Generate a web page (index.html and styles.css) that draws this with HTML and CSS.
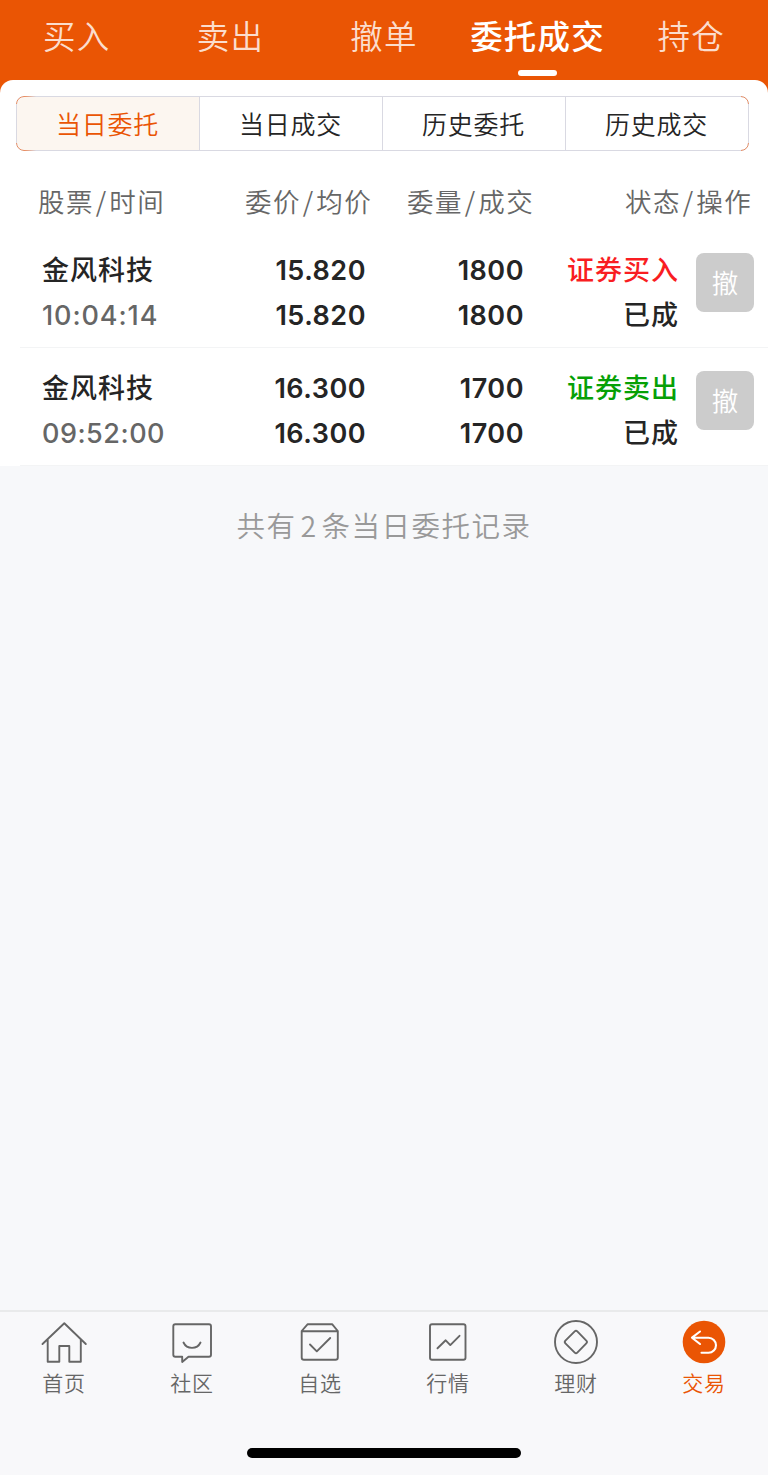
FILE: index.html
```html
<!DOCTYPE html>
<html lang="zh-CN">
<head>
<meta charset="utf-8">
<title>委托成交</title>
<link rel="stylesheet" href="styles.css">
</head>
<body>
<div class="app">
  <header class="top">
    <div class="tab">买入</div>
    <div class="tab">卖出</div>
    <div class="tab">撤单</div>
    <div class="tab active">委托成交</div>
    <div class="tab">持仓</div>
  </header>
  <main class="sheet">
    <div class="segments">
      <div class="segment on">当日委托</div>
      <div class="segment">当日成交</div>
      <div class="segment">历史委托</div>
      <div class="segment">历史成交</div>
    </div>
    <div class="heads">
      <div class="head">股票<i>/</i>时间</div>
      <div class="head">委价<i>/</i>均价</div>
      <div class="head">委量<i>/</i>成交</div>
      <div class="head">状态<i>/</i>操作</div>
    </div>
    <div class="order">
      <div class="cell"><div class="name">金风科技</div><div class="time wide">10:04:14</div></div>
      <div class="cell num"><div>15.820</div><div>15.820</div></div>
      <div class="cell num"><div>1800</div><div>1800</div></div>
      <div class="cell state"><div class="buy">证券买入</div><div>已成</div></div>
      <div class="cancel">撤</div>
    </div>
    <div class="order">
      <div class="cell"><div class="name">金风科技</div><div class="time">09:52:00</div></div>
      <div class="cell num"><div>16.300</div><div>16.300</div></div>
      <div class="cell num"><div>1700</div><div>1700</div></div>
      <div class="cell state"><div class="sell">证券卖出</div><div>已成</div></div>
      <div class="cancel">撤</div>
    </div>
  </main>
  <p class="summary">共有<span class="count">2</span>条当日委托记录</p>
  <nav class="nav">
    <div class="item">
      <svg class="icon" viewBox="0 0 48 48"><path d="M2.500 24 24.300 3.300 45.800 24M7.700 19.500v22.300h11.600V26h10v15.800h11.500V19.500"/></svg>
      <span>首页</span>
    </div>
    <div class="item">
      <svg class="icon" viewBox="0 0 48 48"><path d="M7 4.200h34q2 0 2 2v28.500q0 2-2 2H20.500L14.200 42v-5.300H7.300q-2 0-2-2V6.200q0-2 2-2ZM15.500 22.500a9.400 9.400 0 0 0 17 0"/></svg>
      <span>社区</span>
    </div>
    <div class="item">
      <svg class="icon" viewBox="0 0 48 48"><path d="M11.500 4.300h24.800l5.500 6.700v26.500q0 2.300-2.300 2.300h-31.500q-2.300 0-2.300-2.300V11ZM6 11.200h35.500M14 24.500l6.800 6.800L34.200 18"/></svg>
      <span>自选</span>
    </div>
    <div class="item">
      <svg class="icon" viewBox="0 0 48 48"><rect x="6" y="4.300" width="35.500" height="35.500" rx="2"/><path d="m13.500 28.300 8.200-8 4.600 4.800 9.200-9.300"/></svg>
      <span>行情</span>
    </div>
    <div class="item">
      <svg class="icon" viewBox="0 0 48 48"><circle cx="24" cy="22" r="21"/><path d="m22.700 11.400-9.300 9.300q-1.300 1.300 0 2.600l9.300 9.300q1.300 1.300 2.600 0l9-9.300q1.300-1.300 0-2.600l-9-9.300q-1.300-1.300-2.600 0Z"/></svg>
      <span>理财</span>
    </div>
    <div class="item current">
      <svg class="icon" viewBox="0 0 48 48"><circle class="disc" cx="24" cy="22" r="21.300"/><path d="m20 11.500-8 6.200 8 6.300M12.500 17.700h16a7.500 7.500 0 0 1 0 15H21.500"/></svg>
      <span>交易</span>
    </div>
  </nav>
  <div class="home"><div class="bar"></div></div>
</div>
</body>
</html>
```
FILE: styles.css
```css
* { box-sizing: border-box; }
body {
  margin: 0;
  background: #f7f8fa;
  font-family: "Noto Sans CJK SC", sans-serif;
  color: #252525;
}
.app {
  display: flex;
  flex-direction: column;
  width: 768px;
  height: 1475px;
  background: linear-gradient(#ea5504 0 100px, #f7f8fa 100px);
}
.top { display: flex; height: 80px; }
.tab {
  flex: 1;
  display: flex;
  flex-direction: column;
  align-items: center;
  padding-top: 11px;
  color: #fbddcd;
  font-size: 32.500px;
  line-height: 48px;
  font-weight: 350;
  letter-spacing: 1.200px;
  white-space: nowrap;
}
.tab.active { color: #fff; font-weight: 500; }
.tab.active::after {
  content: "";
  width: 39px;
  height: 6px;
  margin-top: 11px;
  border-radius: 3px;
  background: #fff;
}
.sheet {
  height: 386px;
  padding-top: 16px;
  border-radius: 13px 13px 0 0;
  background: #fff;
}
.segments {
  position: relative;
  display: flex;
  height: 55px;
  margin: 0 19px 0 16px;
  border: 1px solid #d9d9e2;
  border-radius: 8px;
}
/* Orange accents on the outer corners of the segmented control */
.segments::after {
  content: "";
  position: absolute;
  inset: -1px;
  border: 1px solid #ea8a5c;
  border-radius: 8px;
  pointer-events: none;
  -webkit-mask:
    linear-gradient(90deg, #000 8px, transparent) 0 0 / 20px 8px no-repeat,
    linear-gradient(90deg, #000 8px, transparent) 0 100% / 20px 8px no-repeat,
    linear-gradient(#000 0 0) 100% 0 / 8px 8px no-repeat,
    linear-gradient(#000 0 0) 100% 100% / 8px 8px no-repeat;
}
.segment {
  flex: 1;
  padding-right: 1px;
  border-left: 1px solid #d9d9e2;
  text-align: center;
  font-size: 25px;
  font-weight: 350;
  line-height: 52px;
  letter-spacing: 0.800px;
}
.segment.on {
  border-left: 0;
  border-radius: 7px 0 0 7px;
  background: #fcf6f0;
  color: #ea5504;
}
.heads {
  display: grid;
  grid-template-columns: 207px 162px 218px 140px;
  height: 79px;
  padding-left: 38px;
  color: #666;
  font-size: 26.500px;
  font-weight: 350;
  line-height: 99px;
  letter-spacing: 1.500px;
  white-space: nowrap;
}
.heads i { margin: 0 1.700px; font-style: normal; }
.order {
  display: grid;
  grid-template-columns: 170px 154px 158px 155px 58px;
  height: 118px;
  margin-left: 20px;
  padding: 17px 14px 0 22px;
  background: linear-gradient(#f3f4f5, #f3f4f5) 0 100% / 100% 1px no-repeat;
  font-size: 27px;
  font-weight: 500;
  line-height: 45px;
  letter-spacing: 1px;
  white-space: nowrap;
}
.name, .state { margin-top: -1px; }
.name { margin-bottom: 1px; }
.num, .state { text-align: right; }
.num, .time {
  font-family: Inter, sans-serif;
  font-weight: 600;
  letter-spacing: 0.500px;
}
.num { padding-top: 1px; }
.time { padding-top: 1px; color: #666; font-weight: 500; }
.time.wide { letter-spacing: 0.900px; }
.buy { color: #f91d22; }
.sell { color: #06a006; }
.cancel {
  width: 58px;
  height: 59px;
  margin: 6px 0 0 17px;
  border-radius: 8px;
  background: #ccc;
  color: #fff;
  text-align: center;
  font-size: 26.500px;
  font-weight: 350;
  line-height: 57px;
  letter-spacing: 0;
}
.summary {
  flex: 1;
  margin: 0;
  padding-top: 38px;
  text-align: center;
  color: #999;
  font-size: 28.500px;
  font-weight: 350;
  line-height: 42px;
  letter-spacing: 1.500px;
}
.count { margin: 0 4px; }
.nav {
  display: flex;
  height: 100px;
  border-top: 2px solid #e9eaeb;
  background: #f8f8fa;
}
.item {
  flex: 1;
  display: flex;
  flex-direction: column;
  align-items: center;
  padding-top: 8px;
  color: #666;
  font-size: 21px;
  font-weight: 350;
  line-height: 28px;
  letter-spacing: 0.800px;
}
.icon {
  width: 48px;
  height: 48px;
  fill: none;
  stroke: #666;
  stroke-width: 1.900;
  stroke-linecap: round;
  stroke-linejoin: round;
}
.current { color: #ea5504; }
.current .icon { stroke: #fff; stroke-width: 2.100; }
.icon .disc { fill: #ea5504; stroke: none; }
.home {
  display: flex;
  justify-content: center;
  height: 65px;
  padding-top: 38px;
  background: #f8f8fa;
}
.bar { width: 274px; height: 10px; border-radius: 5px; background: #000; }
```
